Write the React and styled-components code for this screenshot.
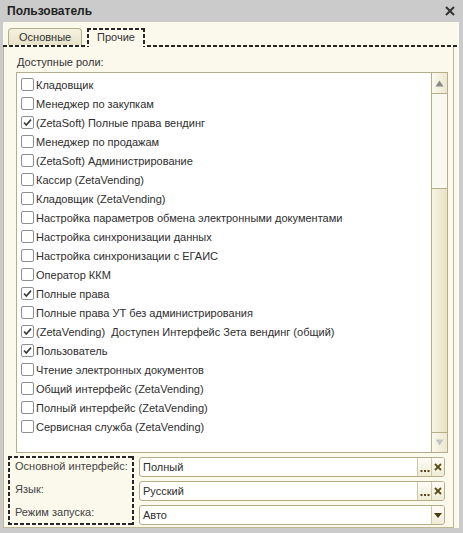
import React from 'react';
import styled, { createGlobalStyle, css } from 'styled-components';

const Global = createGlobalStyle`
  html, body { margin: 0; padding: 0; }
  body {
    font-family: "Liberation Sans", Arial, sans-serif;
    font-size: 11px;
    color: #333;
  }
  * { box-sizing: border-box; }
`;

const DASH = '#262626';
const hDash = `repeating-linear-gradient(90deg, ${DASH} 0 4px, transparent 4px 6px)`;
const vDash = `repeating-linear-gradient(180deg, ${DASH} 0 4px, transparent 4px 6px)`;

const dashedFrame = css`
  background:
    ${hDash} top / 100% 2px no-repeat,
    ${hDash} bottom / 100% 2px no-repeat,
    ${vDash} left / 2px 100% no-repeat,
    ${vDash} right / 2px 100% no-repeat;
`;

const Window = styled.div`
  width: 463px;
  height: 533px;
  background: #cbcbcb;
  display: flex;
  flex-direction: column;
  overflow: hidden;
`;

const TitleBar = styled.div`
  height: 22px;
  flex: none;
  display: flex;
  align-items: center;
  justify-content: space-between;
  padding: 0 8px 0 7px;
  font-weight: bold;
  font-size: 12px;
  color: #222;
`;

const CloseIcon = () => (
  <svg width="10" height="10" viewBox="0 0 10 10">
    <path d="M1 1 L9 9 M9 1 L1 9" stroke="#333" strokeWidth="2" />
  </svg>
);

const Body = styled.div`
  flex: 1;
  margin: 0 4px 5px 3px;
  background: #fbf9ec;
  display: flex;
  flex-direction: column;
`;

const TabStrip = styled.div`
  height: 25px;
  flex: none;
  display: flex;
  align-items: flex-end;
  padding-left: 5px;
  background: ${hDash} bottom / 100% 2px no-repeat;
`;

const Tab = styled.div`
  height: ${p => (p.$active ? 19 : 17)}px;
  width: ${p => p.$w}px;
  margin-bottom: ${p => (p.$active ? 0 : 2)}px;
  margin-left: ${p => (p.$active ? 5 : 0)}px;
  display: flex;
  align-items: center;
  padding-left: 10px;
  color: #333;
  ${p =>
    p.$active
      ? css`
          padding-bottom: 2px;
          background:
            ${hDash} top / 100% 2px no-repeat,
            ${vDash} left / 2px 100% no-repeat,
            ${vDash} right / 2px 100% no-repeat,
            #fbf9ec;
        `
      : css`
          border: 1px solid #b3ad8b;
          border-bottom: none;
          border-radius: 4px 4px 0 0;
          background: linear-gradient(#f5f2e2, #e7e2c8);
        `}
`;

const TabPage = styled.div`
  flex: 1;
  width: 451px;
  border: 1px solid #bdb795;
  border-top: none;
  padding-top: 8px;
  display: flex;
  flex-direction: column;
`;

const SectionLabel = styled.div`
  height: 15px;
  line-height: 15px;
  margin: 0 0 2px 13px;
  color: #333;
`;

const ListBox = styled.div`
  margin-left: 12px;
  width: 432px;
  height: 381px;
  border: 1px solid #b5ae8c;
  background: #fff;
  display: flex;
`;

const Items = styled.div`
  flex: 1;
  padding: 2px 0 0 4px;
  display: flex;
  flex-direction: column;
`;

const Row = styled.div`
  height: 19px;
  display: flex;
  align-items: center;
  white-space: pre;
  color: #2e2e2e;
`;

const Box = styled.span`
  width: 13px;
  height: 13px;
  flex: none;
  border: 1px solid #8f8f8f;
  border-radius: 2px;
  background: #fff;
  margin-right: 2px;
  display: flex;
  align-items: center;
  justify-content: center;
`;

const Check = () => (
  <svg width="11" height="11" viewBox="0 0 11 11">
    <path d="M2 5.5 L4.3 8 L9 2.6" fill="none" stroke="#3a3a3a" strokeWidth="1.6" />
  </svg>
);

const Scrollbar = styled.div`
  width: 16px;
  flex: none;
  border-left: 1px solid #b5ae8c;
  display: flex;
  flex-direction: column;
`;

const ScrollBtn = styled.div`
  height: ${p => p.$h}px;
  flex: none;
  display: flex;
  align-items: center;
  justify-content: center;
  background: linear-gradient(90deg, #fbf9ee, #ece7cf);
  ${p => (p.$top ? 'border-bottom' : 'border-top')}: 1px solid #b5ae8c;
`;

const Track = styled.div`
  flex: 1;
  background: #f9f8f1;
`;

const Thumb = styled.div`
  height: 244px;
  flex: none;
  border-top: 1px solid #b5ae8c;
  background: linear-gradient(90deg, #f7f4e3, #e8e2c3);
`;

const Arrow = ({ up, color }) => (
  <svg width="9" height="7" viewBox="0 0 9 7">
    <path d={up ? 'M4.5 0.5 L8.5 6.5 L0.5 6.5 Z' : 'M0.5 0.5 L8.5 0.5 L4.5 6.5 Z'} fill={color} />
  </svg>
);

const Bottom = styled.div`
  display: flex;
  align-items: flex-start;
  margin: 3px 0 0 4px;
`;

const LabelBox = styled.div`
  width: 126px;
  height: 69px;
  padding: 0 0 0 7px;
  display: flex;
  flex-direction: column;
  gap: 3px;
  ${dashedFrame}
`;

const FieldLabel = styled.div`
  height: 20px;
  line-height: 20px;
  color: #444;
  white-space: nowrap;
`;

const Fields = styled.div`
  margin: 1px 0 0 5px;
  width: 306px;
  display: flex;
  flex-direction: column;
  gap: 4px;
`;

const Field = styled.div`
  height: 20px;
  border: 1px solid #b5ae8a;
  border-radius: 3px;
  background: #fff;
  display: flex;
  overflow: hidden;
`;

const FieldText = styled.div`
  flex: 1;
  padding-left: 3px;
  line-height: 18px;
  color: #2e2e2e;
`;

const FieldBtn = styled.div`
  width: ${p => p.$w}px;
  flex: none;
  border-left: 1px solid #cfc9ab;
  background: linear-gradient(#fefdf8, #efebd6);
  display: flex;
  align-items: center;
  justify-content: center;
`;

const Dots = () => (
  <svg width="10" height="12" viewBox="0 0 10 12">
    <rect x="0.5" y="9" width="2" height="2" fill="#5a4a16" />
    <rect x="4" y="9" width="2" height="2" fill="#5a4a16" />
    <rect x="7.5" y="9" width="2" height="2" fill="#5a4a16" />
  </svg>
);

const Cross = () => (
  <svg width="8" height="8" viewBox="0 0 8 8">
    <path d="M1 1 L7 7 M7 1 L1 7" stroke="#5a4a16" strokeWidth="1.8" />
  </svg>
);

const roles = [
  ['Кладовщик', false],
  ['Менеджер по закупкам', false],
  ['(ZetaSoft) Полные права вендинг', true],
  ['Менеджер по продажам', false],
  ['(ZetaSoft) Администрирование', false],
  ['Кассир (ZetaVending)', false],
  ['Кладовщик (ZetaVending)', false],
  ['Настройка параметров обмена электронными документами', false],
  ['Настройка синхронизации данных', false],
  ['Настройка синхронизации с ЕГАИС', false],
  ['Оператор ККМ', false],
  ['Полные права', true],
  ['Полные права УТ без администрирования', false],
  ['(ZetaVending)  Доступен Интерфейс Зета вендинг (общий)', true],
  ['Пользователь', true],
  ['Чтение электронных документов', false],
  ['Общий интерфейс (ZetaVending)', false],
  ['Полный интерфейс (ZetaVending)', false],
  ['Сервисная служба (ZetaVending)', false],
];

export default function App() {
  return (
    <>
      <Global />
      <Window>
        <TitleBar>
          <span>Пользователь</span>
          <CloseIcon />
        </TitleBar>
        <Body>
          <TabStrip>
            <Tab $w={74}>Основные</Tab>
            <Tab $w={58} $active>Прочие</Tab>
          </TabStrip>
          <TabPage>
            <SectionLabel>Доступные роли:</SectionLabel>
            <ListBox>
              <Items>
                {roles.map(([name, checked]) => (
                  <Row key={name}>
                    <Box>{checked && <Check />}</Box>
                    {name}
                  </Row>
                ))}
              </Items>
              <Scrollbar>
                <ScrollBtn $h={21} $top>
                  <Arrow up color="#8a8a8a" />
                </ScrollBtn>
                <Track />
                <Thumb />
                <ScrollBtn $h={20}>
                  <Arrow color="#c4c4c4" />
                </ScrollBtn>
              </Scrollbar>
            </ListBox>
            <Bottom>
              <LabelBox>
                <FieldLabel>Основной интерфейс:</FieldLabel>
                <FieldLabel>Язык:</FieldLabel>
                <FieldLabel>Режим запуска:</FieldLabel>
              </LabelBox>
              <Fields>
                <Field>
                  <FieldText>Полный</FieldText>
                  <FieldBtn $w={14}><Dots /></FieldBtn>
                  <FieldBtn $w={13}><Cross /></FieldBtn>
                </Field>
                <Field>
                  <FieldText>Русский</FieldText>
                  <FieldBtn $w={14}><Dots /></FieldBtn>
                  <FieldBtn $w={13}><Cross /></FieldBtn>
                </Field>
                <Field>
                  <FieldText>Авто</FieldText>
                  <FieldBtn $w={13}>
                    <svg width="8" height="5" viewBox="0 0 8 5">
                      <path d="M0 0 L8 0 L4 5 Z" fill="#4a3c12" />
                    </svg>
                  </FieldBtn>
                </Field>
              </Fields>
            </Bottom>
          </TabPage>
        </Body>
      </Window>
    </>
  );
}
